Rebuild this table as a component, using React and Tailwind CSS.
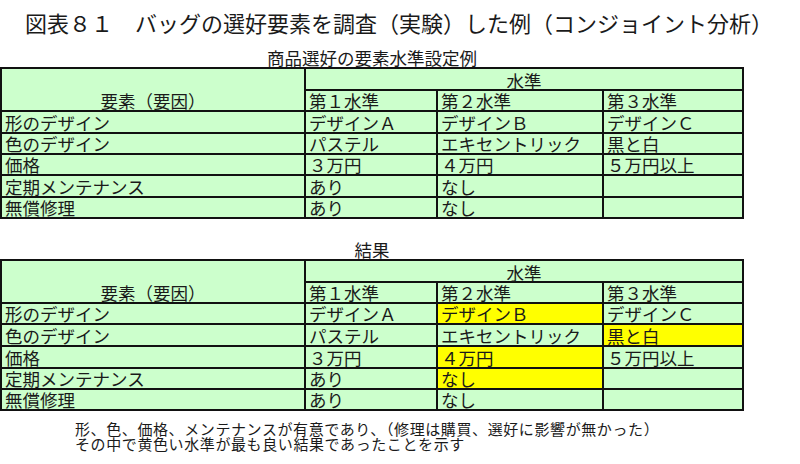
import React from 'react';

// 水準データ (level table rows)
const rows = [
  { label: '形のデザイン', levels: ['デザインＡ', 'デザインＢ', 'デザインＣ'] },
  { label: '色のデザイン', levels: ['パステル', 'エキセントリック', '黒と白'] },
  { label: '価格', levels: ['３万円', '４万円', '５万円以上'] },
  { label: '定期メンテナンス', levels: ['あり', 'なし', ''] },
  { label: '無償修理', levels: ['あり', 'なし', ''] },
];

// 結果で黄色になるセル: "row-col"
const best = ['0-1', '1-2', '2-1', '3-1'];

const Cell = ({ children, yellow }) => (
  <div
    className={`flex items-center pl-[3px] whitespace-nowrap ${
      yellow ? 'bg-[#ffff00]' : 'bg-[#ccffcc]'
    }`}
  >
    {children}
  </div>
);

const LevelTable = ({ highlight = [], rowsClass }) => (
  <div
    className={`grid w-[744px] gap-[2px] p-[2px] bg-[#111] grid-cols-[302px_130px_164px_138px] ${rowsClass}`}
  >
    <div className="row-span-2 flex items-end justify-center bg-[#ccffcc]">
      要素（要因）
    </div>
    <div className="col-span-3 flex items-center justify-center bg-[#ccffcc] pt-[2px]">
      水準
    </div>
    <Cell>第１水準</Cell>
    <Cell>第２水準</Cell>
    <Cell>第３水準</Cell>

    {rows.map((row, r) => (
      <React.Fragment key={row.label}>
        <Cell>{row.label}</Cell>
        {row.levels.map((lv, c) => (
          <Cell key={c} yellow={highlight.includes(`${r}-${c}`)}>
            {lv}
          </Cell>
        ))}
      </React.Fragment>
    ))}
  </div>
);

export default function App() {
  return (
    <div
      className="w-[800px] h-[464px] bg-white text-[#1a1a1a] overflow-hidden"
      style={{ fontFamily: '"Noto Sans CJK JP", "Noto Sans", sans-serif' }}
    >
      {/* --- TITLE --- */}
      <h1 className="pt-[10px] pl-[25px] text-[22px] leading-[25px] whitespace-nowrap">
        図表８１　バッグの選好要素を調査（実験）した例（コンジョイント分析）
      </h1>

      <div className="text-[17.5px] leading-[19px]">
        {/* --- 設定例 --- */}
        <p className="mt-[13px] w-[744px] text-center">商品選好の要素水準設定例</p>
        <LevelTable rowsClass="grid-rows-[20px_19px_20px_19px_19px_20px_19px]" />

        {/* --- 結果 --- */}
        <p className="mt-[21px] w-[744px] text-center">結果</p>
        <LevelTable
          highlight={best}
          rowsClass="grid-rows-[20px_19px_19px_20px_20px_19px_19px]"
        />
      </div>

      {/* --- NOTE --- */}
      <div className="mt-[10px] pl-[75px] text-[15px] tracking-[0.6px] leading-[15px] whitespace-nowrap">
        <p>形、色、価格、メンテナンスが有意であり、（修理は購買、選好に影響が無かった）</p>
        <p>その中で黄色い水準が最も良い結果であったことを示す</p>
      </div>
    </div>
  );
}
